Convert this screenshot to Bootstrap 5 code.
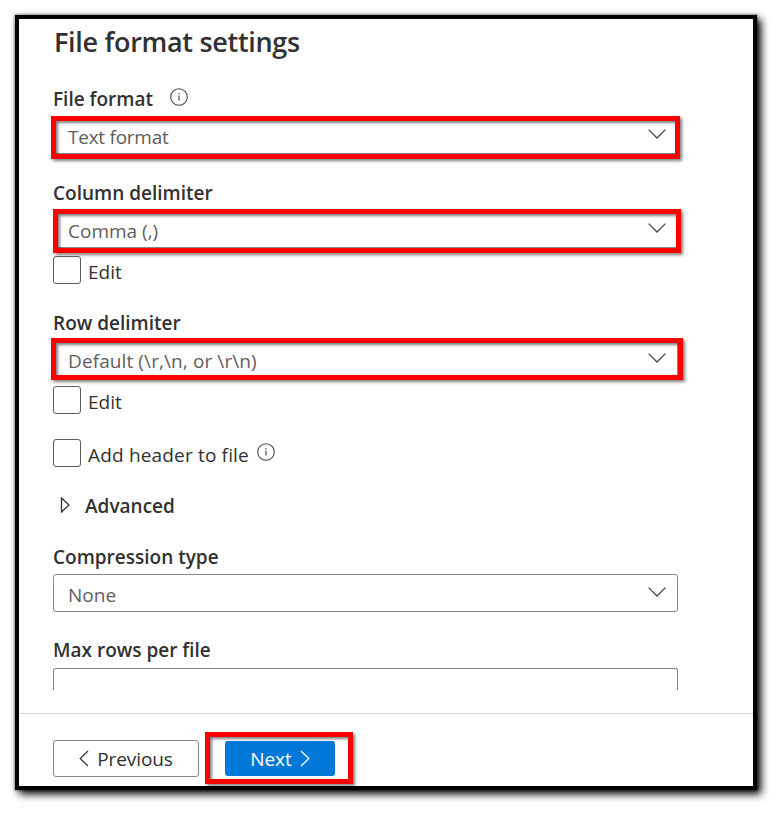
<!DOCTYPE html>
<html lang="en">
<head>
<meta charset="utf-8">
<meta name="viewport" content="width=device-width, initial-scale=1">
<title>File format settings</title>
<link href="https://cdn.jsdelivr.net/npm/bootstrap@5.3.0/dist/css/bootstrap.min.css" rel="stylesheet">
<style>
body{font-family:"Open Sans","Noto Sans",sans-serif;font-size:19px;color:#323130;background:#fff;min-height:817px;padding:15px 0 0 15px}
.panel{width:742px;height:775px;border:4px solid #000;background:#fff;box-shadow:0 0 2px 1px rgba(0,0,0,.3),4px 4px 8px 0 #000}
.scroller{height:671px;padding-left:34px}
.panel-title{height:63px;font-size:27px;line-height:45px;font-weight:600;margin:0;letter-spacing:-.3px;padding-left:1px}
.field-label{height:34px;line-height:34px;font-weight:600}
.field-label svg{margin:6px 0 0 17px}
.field{width:625px;position:relative}
.picker{height:38px;border:1px solid #8a8886;border-radius:3px;padding:2px 11px 0 14px;color:#605e5c;line-height:36px}
.picker svg{margin-top:10px}
.clipped{height:22px;border:1px solid #8a8886;border-bottom:0;border-radius:3px 3px 0 0}
.gap-field{margin-top:22px}
.tick{height:28px;margin-top:8px}
.tick.spaced{margin-top:25px}
.tick svg{margin:4px 0 0 8px}
.tick-box{width:28px;height:28px;border:1px solid #605e5c;border-radius:3px;margin-right:7px;flex:none}
.txt{line-height:32px;white-space:nowrap}
.advanced{height:30px;margin:24px 0 19px;padding-left:7px;font-weight:600}
.advanced svg{margin:-2px 14px 0 0}
.mark-box{position:absolute;border:5px solid #f00;box-shadow:2px 2px 3px 0 rgba(0,0,0,.5),inset 2px 2px 3px 0 rgba(0,0,0,.5)}
.m1{left:-2px;top:0;width:629px;height:43px}
.m2{left:0;top:-1px;width:628px;height:44px}
.m3{left:-2px;top:-2px;width:632px;height:42px}
.m4{left:-20px;top:-9px;width:148px;height:52px}
.foot{height:73px;margin-top:23px;border-top:1px solid #d6d6d6;padding:26px 0 0 34px}
.foot .btn{font-size:19px;padding:0;border-radius:3px}
.foot .btn span{line-height:33px;padding-top:2px}
.btn-prev{width:146px;height:37px;border:1px solid #8a8886;color:#323130;background:#fff}
.btn-next{width:110px;height:35px;background:#0078d7;color:#fff;border:0}
.next-wrap{position:relative;margin:1px 0 0 26px;width:110px;height:35px}
.t-tf{letter-spacing:-.25px}
.t-de{letter-spacing:.1px}
.t-ah{letter-spacing:.17px}
.t-pr{letter-spacing:-.1px}
.t-mr{position:relative;top:-1px}
</style>
<script src="https://cdn.jsdelivr.net/npm/bootstrap@5.3.0/dist/js/bootstrap.bundle.min.js"></script>
</head>
<body>
<svg width="0" height="0" class="position-absolute">
<defs>
<symbol id="chev" viewBox="0 0 18 10"><path d="M.6.6 9 9 17.4.6" fill="none" stroke="#484644" stroke-width="1.3"/></symbol>
<symbol id="info" viewBox="0 0 18 18"><circle cx="9" cy="9" r="8.3" fill="none" stroke="#484644" stroke-width="1.1"/><path d="M9 7.5v5M9 5v1.3" stroke="#484644" stroke-width="1.2"/></symbol>
</defs>
</svg>
<main class="panel">
<div class="scroller">
<h1 class="panel-title">File format settings</h1>
<div class="field">
<div class="field-label d-flex"><span>File format</span><svg width="18" height="18"><use href="#info"/></svg></div>
<div class="position-relative">
<div class="picker d-flex justify-content-between"><span class="t-tf">Text format</span><svg width="18" height="10"><use href="#chev"/></svg></div>
<div class="mark-box m1"></div>
</div>
</div>
<div class="field gap-field">
<div class="field-label">Column delimiter</div>
<div class="position-relative">
<div class="picker d-flex justify-content-between"><span>Comma (,)</span><svg width="18" height="10"><use href="#chev"/></svg></div>
<div class="mark-box m2"></div>
</div>
<div class="tick d-flex position-relative"><span class="tick-box"></span><span class="txt">Edit</span></div>
</div>
<div class="field gap-field">
<div class="field-label">Row delimiter</div>
<div class="position-relative">
<div class="picker d-flex justify-content-between"><span class="t-de">Default (\r,\n, or \r\n)</span><svg width="18" height="10"><use href="#chev"/></svg></div>
<div class="mark-box m3"></div>
</div>
<div class="tick d-flex position-relative"><span class="tick-box"></span><span class="txt">Edit</span></div>
<div class="tick spaced d-flex"><span class="tick-box"></span><span class="txt t-ah">Add header to file</span><svg width="18" height="18"><use href="#info"/></svg></div>
</div>
<div class="advanced d-flex align-items-center"><svg width="11" height="16" viewBox="0 0 11 16"><path d="M1.5 1v14L9 8z" fill="none" stroke="#323130" stroke-width="1.3"/></svg><span class="txt">Advanced</span></div>
<div class="field">
<div class="field-label">Compression type</div>
<div class="picker d-flex justify-content-between"><span>None</span><svg width="18" height="10"><use href="#chev"/></svg></div>
</div>
<div class="field gap-field">
<div class="field-label"><span class="t-mr">Max rows per file</span></div>
<div class="clipped"></div>
</div>
</div>
<footer class="foot d-flex">
<button class="btn btn-prev d-flex justify-content-center align-items-center"><svg width="10" height="17" viewBox="0 0 10 17"><path d="M9 1 1.2 8.5 9 16" fill="none" stroke="#323130" stroke-width="1.2"/></svg><span class="t-pr ms-2">Previous</span></button>
<div class="next-wrap">
<button class="btn btn-next d-flex justify-content-center align-items-center"><span class="me-2">Next</span><svg width="10" height="17" viewBox="0 0 10 17"><path d="M1 1 8.8 8.5 1 16" fill="none" stroke="#fff" stroke-width="1.3"/></svg></button>
<div class="mark-box m4"></div>
</div>
</footer>
</main>
</body>
</html>
